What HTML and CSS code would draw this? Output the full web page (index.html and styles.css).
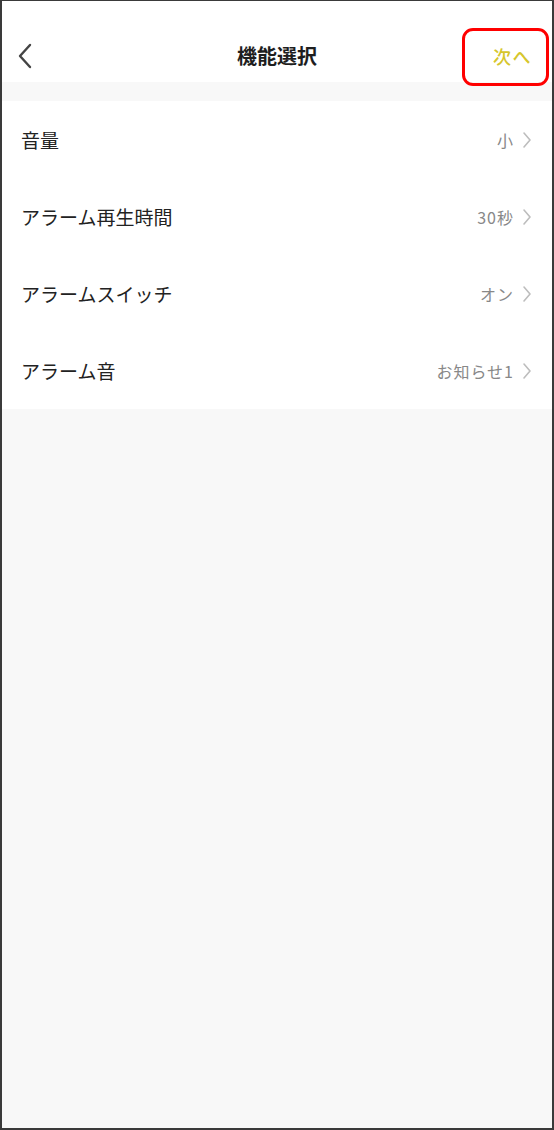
FILE: index.html
```html
<!DOCTYPE html>
<html lang="ja">
<head>
<meta charset="utf-8">
<link rel="stylesheet" href="styles.css">
</head>
<body>
<div class="frame">
  <header class="nav">
    <div class="back">
      <svg width="16" height="26" viewBox="0 0 16 26"><path d="M13 2 L3 13 L13 24" fill="none" stroke="#444" stroke-width="2.4" stroke-linecap="round" stroke-linejoin="round"/></svg>
    </div>
    <h1 class="title">機能選択</h1>
    <div class="next-wrap"><span class="next">次へ<span class="highlight"></span></span></div>
  </header>
  <div class="gap"></div>
  <ul class="list">
    <li class="row"><span class="label">音量</span><span class="value">小<svg class="chev" width="10" height="18" viewBox="0 0 10 18"><path d="M2 2 L8 9 L2 16" fill="none" stroke="#bdbdbd" stroke-width="1.6" stroke-linecap="round" stroke-linejoin="round"/></svg></span></li>
    <li class="row"><span class="label">アラーム再生時間</span><span class="value">30秒<svg class="chev" width="10" height="18" viewBox="0 0 10 18"><path d="M2 2 L8 9 L2 16" fill="none" stroke="#bdbdbd" stroke-width="1.6" stroke-linecap="round" stroke-linejoin="round"/></svg></span></li>
    <li class="row"><span class="label">アラームスイッチ</span><span class="value">オン<svg class="chev" width="10" height="18" viewBox="0 0 10 18"><path d="M2 2 L8 9 L2 16" fill="none" stroke="#bdbdbd" stroke-width="1.6" stroke-linecap="round" stroke-linejoin="round"/></svg></span></li>
    <li class="row"><span class="label">アラーム音</span><span class="value">お知らせ1<svg class="chev" width="10" height="18" viewBox="0 0 10 18"><path d="M2 2 L8 9 L2 16" fill="none" stroke="#bdbdbd" stroke-width="1.6" stroke-linecap="round" stroke-linejoin="round"/></svg></span></li>
  </ul>
</div>
</body>
</html>
```
FILE: styles.css
```css
* { box-sizing: border-box; }
html, body { margin: 0; padding: 0; }
body {
  width: 554px;
  height: 1130px;
  font-family: "Noto Sans CJK JP", "Noto Sans", sans-serif;
  background: #f8f8f8;
}
.frame {
  width: 554px;
  height: 1130px;
  border-style: solid;
  border-color: #3a3a3a;
  border-width: 1px 2px 2px 2px;
  background: #f8f8f8;
  overflow: hidden;
}
.nav {
  height: 81px;
  background: #fff;
  display: grid;
  grid-template-columns: 1fr auto 1fr;
  align-items: center;
  padding-top: 28px;
}
.back { display: flex; align-items: center; padding-left: 15px; }
.title {
  margin: 0;
  font-size: 20px;
  font-weight: 700;
  color: #1e1e1e;
  line-height: 26px;
}
.next-wrap {
  display: flex;
  justify-content: flex-end;
  padding-right: 20px;
}
.next {
  position: relative;
  font-size: 18px;
  line-height: 26px;
  color: #d6c62c;
  font-weight: 500;
  letter-spacing: 1.5px;
}
.highlight {
  position: absolute;
  left: -31px;
  top: -15px;
  width: 87px;
  height: 58px;
  border: 3px solid #ff0000;
  border-radius: 11px;
}
.gap { height: 19px; }
.list {
  list-style: none;
  margin: 0;
  padding: 0;
  background: #fff;
}
.row {
  height: 77px;
  display: flex;
  align-items: center;
  justify-content: space-between;
  padding: 0 20px 0 19px;
}
.label {
  font-size: 19px;
  color: #222;
}
.value {
  display: flex;
  align-items: center;
  font-size: 16px;
  color: #888;
  letter-spacing: 1px;
}
.chev { margin-left: 8px; }
```
